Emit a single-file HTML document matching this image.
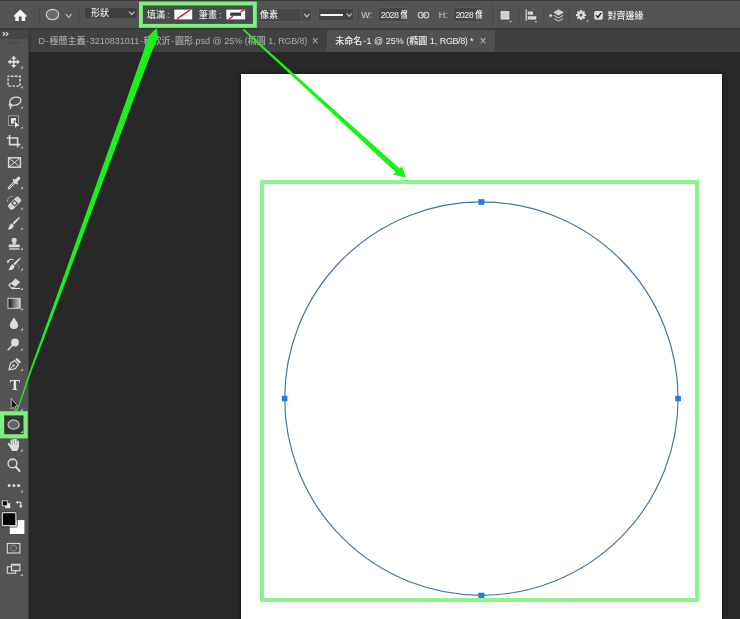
<!DOCTYPE html>
<html lang="zh-Hant">
<head>
<meta charset="utf-8">
<title>Photoshop</title>
<style>
*{box-sizing:border-box;margin:0;padding:0}
html,body{width:740px;height:619px;overflow:hidden;background:#282828}
body{will-change:transform}
body{position:relative;font-family:"Liberation Sans","Noto Sans CJK TC",sans-serif;color:#e8e8e8;font-size:9px;line-height:1;font-weight:500}
.abs{position:absolute}
#optbar{left:0;top:0;width:740px;height:28px;background:#535353;border-top:1.5px solid #3c3c3c}
#strip{left:0;top:28px;width:740px;height:24px;background:#3a3a3a}
#tabbar{left:30.5px;top:29.5px;width:710px;height:22px;background:#414141}
#tools{left:0;top:29.5px;width:29.2px;height:590px;background:#535353;border-top:9.3px solid #464646;border-right:1.3px solid #3d3d3d}
#canvas{left:241px;top:74px;width:481px;height:545px;background:#fff;box-shadow:0 0 3px 1px #1c1c1c}
.t{position:absolute;white-space:nowrap}
.sep{position:absolute;top:5px;width:1px;height:19px;background:#464646}
.fld{position:absolute;background:#474747;border:1px solid #575757}
.dd{position:absolute;background:#3f3f3f;border-radius:2px}
.tab{position:absolute;top:0;height:22px}
.hy{display:inline-block;width:4.4px;text-align:center}
</style>
</head>
<body>
<div id="strip" class="abs"></div>
<div id="optbar" class="abs"></div>
<div id="tabbar" class="abs">
  <div class="tab" style="left:0;width:296px"></div>
  <div class="tab" style="left:296.5px;width:167.5px;background:#505050"></div>
</div>
<div id="tools" class="abs"></div>
<div id="canvas" class="abs"></div>

<!-- option bar -->
<div class="sep" style="left:39px;top:8px;height:16px"></div>
<div class="sep" style="left:78px;top:8px;height:16px"></div>
<div class="sep" style="left:357.5px;top:7px;height:16px;background:#4a4a4a"></div>
<div class="sep" style="left:491.5px;top:4.5px;height:20px"></div>
<div class="sep" style="left:517.5px;top:4.5px;height:20px"></div>
<div class="sep" style="left:543px;top:4.5px;height:20px;background:#4b4b4b"></div>
<div class="sep" style="left:569px;top:4.5px;height:20px"></div>
<div class="dd" style="left:85px;top:7.5px;width:52px;height:10.5px"></div>
<div class="t" id="t_shape" style="left:91px;top:9.2px">形狀</div>
<div class="abs" style="left:142px;top:5px;width:112px;height:19.5px;background:#4a4a4a"></div>
<div class="t" id="t_fill" style="left:146.8px;top:11.3px;letter-spacing:.3px">填滿<span style="margin-left:1.5px">:</span></div>
<div class="t" id="t_stroke" style="left:198.8px;top:11.3px;letter-spacing:.3px">筆畫<span style="margin-left:1.5px">:</span></div>
<div class="fld" style="left:257.5px;top:8px;width:44px;height:13.5px"></div>
<div class="fld" style="left:301px;top:8px;width:11px;height:13.5px"></div>
<div class="t" id="t_px" style="left:260px;top:11.1px">像素</div>
<div class="dd" style="left:318px;top:7.8px;width:36px;height:13.4px;background:#424242;border:1px solid #575757;border-radius:1px"></div>
<div class="t" id="t_w" style="left:361.3px;top:10.6px;color:#d2d2d2">W:</div>
<div class="fld" style="left:378px;top:7.3px;width:30.3px;height:15.2px;overflow:hidden"><div class="t" id="t_wv" style="left:1.8px;top:2.3px;color:#ececec"><span style="letter-spacing:-.62px">2028 </span>像</div></div>
<div class="t" id="t_h" style="left:438.8px;top:10.6px;color:#d2d2d2">H:</div>
<div class="fld" style="left:452.7px;top:7.3px;width:30.3px;height:15.2px;overflow:hidden"><div class="t" id="t_hv" style="left:1.8px;top:2.3px;color:#ececec"><span style="letter-spacing:-.62px">2028 </span>像</div></div>
<div class="t" id="t_align" style="left:607.6px;top:12px">對齊邊緣</div>

<!-- tab texts -->
<div class="t" id="t_tab1" style="left:38.5px;top:37.2px;color:#acacac"><span id="s1">D</span><span id="s2" class="hy">-</span><span id="s3">極簡主義</span><span id="s4" class="hy">-</span><span id="s5">3210831011</span><span id="s6" class="hy">-</span><span id="s7">程欣沂</span><span id="s8" class="hy">-</span><span id="s9">圓形</span><span id="s10">.psd</span><span id="s11"> @ </span><span id="s12">25%</span><span id="s13"> (</span><span id="s14">橢圓</span><span id="s15"> 1, </span><span id="s16" style="letter-spacing:-.2px">RGB/8)</span></div>
<div class="t" id="t_x1" style="left:311.8px;top:35.2px;color:#b0b0b0;font-size:12px;font-weight:400">×</div>
<div class="t" id="t_tab2" style="left:335.2px;top:37.2px;color:#f0f0f0"><span id="u1">未命名</span><span id="u2" class="hy">-</span><span id="u3">1</span><span id="u4"> @ </span><span id="u5">25%</span><span id="u6"> (</span><span id="u7">橢圓</span><span id="u8"> 1, </span><span id="u9" style="letter-spacing:-.4px">RGB/8)</span><span id="u10"> *</span></div>
<div class="t" id="t_x2" style="left:479.4px;top:35.2px;color:#b8b8b8;font-size:12px;font-weight:400">×</div>

<svg class="abs" id="optsvg" style="left:0;top:0" width="740" height="30" viewBox="0 0 740 30">
<path d="M20.3,9.5 L26.9,15.7 L26.2,16.9 L25.2,16.5 V21.1 H21.6 V16.5 H18.8 V21.1 H15.3 V16.5 L14.4,16.9 L13.6,15.7 Z" fill="#f4f4f4"/>
<ellipse cx="52.5" cy="14.6" rx="6.2" ry="5.2" fill="#6c6c6c" stroke="#cfcfcf" stroke-width="1.1"/>
<path d="M65.9,14.100000000000001 L68.7,17.5 L71.5,14.100000000000001" fill="none" stroke="#c4c4c4" stroke-width="1.1"/>
<path d="M129.20000000000002,11.7 L131.8,14.7 L134.4,11.7" fill="none" stroke="#c4c4c4" stroke-width="1.1"/>
<path d="M304.2,13.9 L306.8,16.9 L309.40000000000003,13.9" fill="none" stroke="#c4c4c4" stroke-width="1.1"/>
<path d="M346.59999999999997,13.3 L349.2,16.3 L351.8,13.3" fill="none" stroke="#c4c4c4" stroke-width="1.1"/>
<rect x="174" y="9.2" width="18.6" height="10.6" fill="#fff" stroke="#3a3a3a" stroke-width="0.6"/><path d="M177,18.8 L190,10.2" stroke="#cc1f2d" stroke-width="1.5"/>
<rect x="226" y="9.2" width="19.4" height="10.6" fill="#fff" stroke="#3a3a3a" stroke-width="0.6"/><rect x="230.2" y="12.6" width="11" height="3.2" fill="#3a3a3a"/><path d="M229,19 L233,16.4 M240.5,11.8 L244.4,9.6" stroke="#cc1f2d" stroke-width="1.4"/>
<rect x="320.4" y="14" width="22.6" height="2" fill="#f4f4f4"/>
<g fill="none" stroke="#c6c6c6" stroke-width="1.2"><rect x="418.3" y="12.4" width="4.9" height="5.4" rx="2.6"/><rect x="423.8" y="12.4" width="4.9" height="5.4" rx="2.6"/><path d="M421,15.1 H426"/></g>
<rect x="501.1" y="11.7" width="7.7" height="7.3" fill="#cfcfcf" stroke="#ececec" stroke-width="0.9"/><path d="M509.4,21 h2.6 l-1.3,1.5 Z" fill="#d0d0d0"/>
<rect x="525.6" y="9.2" width="1.2" height="11.6" fill="#d6d6d6"/><rect x="527.8" y="11.5" width="5.2" height="3.2" fill="#d6d6d6"/><rect x="527.8" y="16.2" width="8.4" height="3.4" fill="#d6d6d6"/><path d="M534.6,21 h2.6 l-1.3,1.5 Z" fill="#d0d0d0"/>
<g fill="none" stroke="#d0d0d0" stroke-width="1"><path d="M554,12.4 L558.6,9.8 L563.2,12.4 L558.6,15 Z" fill="#d0d0d0"/><path d="M554,15.4 L558.6,18 L563.2,15.4"/><path d="M554,18.6 L558.6,21.2 L563.2,18.6"/><path d="M549,15.6 h3.4 M550.7,13.9 v3.4" stroke-width="1.1"/></g>
<g transform="translate(581,15)" fill="#dadada"><path fill-rule="evenodd" d="M-3.7,0 a3.7,3.7 0 1 0 7.4,0 a3.7,3.7 0 1 0 -7.4,0 Z M-1.5,0 a1.5,1.5 0 1 1 3,0 a1.5,1.5 0 1 1 -3,0 Z"/><rect x="-1" y="-5" width="2" height="2.4" transform="rotate(0)"/><rect x="-1" y="-5" width="2" height="2.4" transform="rotate(45)"/><rect x="-1" y="-5" width="2" height="2.4" transform="rotate(90)"/><rect x="-1" y="-5" width="2" height="2.4" transform="rotate(135)"/><rect x="-1" y="-5" width="2" height="2.4" transform="rotate(180)"/><rect x="-1" y="-5" width="2" height="2.4" transform="rotate(225)"/><rect x="-1" y="-5" width="2" height="2.4" transform="rotate(270)"/><rect x="-1" y="-5" width="2" height="2.4" transform="rotate(315)"/></g><path d="M586.2,20.4 h2.6 l-1.3,1.5 Z" fill="#d0d0d0"/>
<rect x="594.2" y="11.1" width="8.6" height="8.6" rx="1.6" fill="#dedede"/><path d="M596,15.2 L597.9,17.3 L601.2,13" fill="none" stroke="#2e2e2e" stroke-width="1.5"/>
</svg>
<svg class="abs" id="toolsvg" style="left:0;top:0" width="40" height="619" viewBox="0 0 40 619">
<path d="M2.9,32.2 L4.9,34 L2.9,35.8 M6,32.2 L8,34 L6,35.8" fill="none" stroke="#e0e0e0" stroke-width="1.1"/>
<rect x="8" y="42" width="12.4" height="1.2" fill="#474747"/>
<g transform="translate(13.8,61.9)" fill="#dcdcdc"><path d="M0,-6.2 L2.7,-3.1 L0.8,-3.1 L0.8,-0.8 L3.1,-0.8 L3.1,-2.7 L6.2,0 L3.1,2.7 L3.1,0.8 L0.8,0.8 L0.8,3.1 L2.7,3.1 L0,6.2 L-2.7,3.1 L-0.8,3.1 L-0.8,0.8 L-3.1,0.8 L-3.1,2.7 L-6.2,0 L-3.1,-2.7 L-3.1,-0.8 L-0.8,-0.8 L-0.8,-3.1 L-2.7,-3.1 Z"/></g>
<path d="M22.8,66.0 V68.4 H20.400000000000002 Z" fill="#c8c8c8"/>
<rect x="8.1" y="76.3" width="11.9" height="9.8" fill="none" stroke="#dcdcdc" stroke-width="1.4" stroke-dasharray="2.6 1.4" stroke-dashoffset="1.3"/>
<path d="M22.8,85.8 V88.2 H20.400000000000002 Z" fill="#c8c8c8"/>
<g fill="none" stroke="#dcdcdc" stroke-width="1.3"><ellipse cx="15.3" cy="101.2" rx="5.8" ry="3.9" transform="rotate(-18 15.3 101.2)"/><path d="M10.2,103.6 C8.6,104.6 9.3,106.6 10.9,106.2 C12.2,105.8 11.6,104 10.4,104.6 M10.8,106.2 C11.2,107.4 10.6,108.3 9.8,108.8"/></g>
<path d="M22.8,106.19999999999999 V108.6 H20.400000000000002 Z" fill="#c8c8c8"/>
<rect x="8.4" y="115.8" width="10.2" height="9.6" fill="none" stroke="#a4a4a4" stroke-width="0.9"/><rect x="9.6" y="117" width="7.2" height="7.4" fill="#3e3e3e"/><rect x="10.8" y="118" width="5.3" height="5.6" fill="#e4e4e4"/><path d="M14.3,120.4 L20.4,126 L16.8,126.6 L14.5,129.2 Z" fill="#f0f0f0" stroke="#3c3c3c" stroke-width="0.8" stroke-linejoin="round"/>
<path d="M22.8,126.19999999999999 V128.6 H20.400000000000002 Z" fill="#c8c8c8"/>
<path d="M9.6,135 V144.6 H20.4 M6.8,138 H17.6 V147.4" fill="none" stroke="#dcdcdc" stroke-width="1.6"/>
<path d="M22.8,146.2 V148.6 H20.400000000000002 Z" fill="#c8c8c8"/>
<g fill="none" stroke="#dcdcdc"><rect x="8.6" y="157.8" width="11.8" height="9.4" stroke-width="1.4"/><path d="M8.6,157.8 L20.4,167.2 M20.4,157.8 L8.6,167.2" stroke-width="1"/></g>
<g stroke-linecap="round"><path d="M9,188 L15.6,181.4" stroke="#dcdcdc" stroke-width="2.6"/><path d="M9.6,187.4 L14.8,182.2" stroke="#535353" stroke-width="0.9"/><path d="M15.2,181.8 L18.6,178.4" stroke="#dcdcdc" stroke-width="3.4"/><path d="M13.4,179.6 L17.4,183.6" stroke="#dcdcdc" stroke-width="1.6"/></g>
<path d="M22.8,186.6 V189 H20.400000000000002 Z" fill="#c8c8c8"/>
<g transform="rotate(-45 14.6 203.2)"><rect x="7.4" y="200" width="14.4" height="6.4" rx="2" fill="#dcdcdc"/><rect x="12.1" y="200.7" width="5" height="5" fill="#535353"/><rect x="13.3" y="201.9" width="2.6" height="2.6" fill="#dcdcdc"/><path d="M9.6,201.5 v3.4 M19.6,201.5 v3.4" stroke="#535353" stroke-width="0.8" stroke-dasharray="0.8 0.8"/></g><path d="M7.6,201.5 A4.6,4.6 0 0 1 12.5,196.3" fill="none" stroke="#dcdcdc" stroke-width="1" stroke-dasharray="1.2 1"/>
<path d="M22.8,207.2 V209.6 H20.400000000000002 Z" fill="#c8c8c8"/>
<g transform="translate(0,0)" fill="#dcdcdc"><path d="M12.6,222.8 L19.1,216.9 L19.9,217.7 L14.2,224.5 Z"/><path d="M11.9,223.3 L13.8,225.2 C13.6,228.3 10.8,229.8 7.6,229.4 C9.4,228 8.8,225 11.9,223.3 Z"/></g>
<path d="M22.8,227.2 V229.6 H20.400000000000002 Z" fill="#c8c8c8"/>
<g fill="#dcdcdc"><circle cx="14.2" cy="240.3" r="2.5"/><path d="M13,242 h2.4 l0.6,2.6 h-3.6 Z"/><path d="M9.4,244.4 h9.6 a0.8,0.8 0 0 1 0.8,0.8 v2 h-11.2 v-2 a0.8,0.8 0 0 1 0.8,-0.8 Z"/><rect x="9.2" y="248.3" width="10.2" height="1.3"/></g>
<path d="M22.8,247.6 V250 H20.400000000000002 Z" fill="#c8c8c8"/>
<g transform="translate(0.8,40.8)" fill="#dcdcdc"><path d="M12.6,222.8 L19.1,216.9 L19.9,217.7 L14.2,224.5 Z"/><path d="M11.9,223.3 L13.8,225.2 C13.6,228.3 10.8,229.8 7.6,229.4 C9.4,228 8.8,225 11.9,223.3 Z"/></g>
<path d="M8,262 C8.6,259.4 11.4,258.6 13.4,260" fill="none" stroke="#dcdcdc" stroke-width="1.1"/><path d="M6.7,260.2 L9.6,261.2 L7.6,263.4 Z" fill="#dcdcdc"/><path d="M17.6,264.6 L19.4,267 L17.8,269.4" fill="none" stroke="#dcdcdc" stroke-width="0.8" stroke-dasharray="1 1"/>
<path d="M22.8,268.0 V270.4 H20.400000000000002 Z" fill="#c8c8c8"/>
<g><path d="M15.4,278.6 L20.2,281.9 L15.3,286.7 L10.5,283.4 Z" fill="#dcdcdc"/><path d="M10.9,283 L8.8,285.2 L11.9,288.3 L14.6,287" fill="none" stroke="#dcdcdc" stroke-width="1.1"/><path d="M11.5,288.5 H20.2" stroke="#dcdcdc" stroke-width="1.1"/></g>
<path d="M22.8,287.6 V290 H20.400000000000002 Z" fill="#c8c8c8"/>
<defs><linearGradient id="gr" x1="0" x2="1" y1="0" y2="0"><stop offset="0" stop-color="#111"/><stop offset="1" stop-color="#cfcfcf"/></linearGradient></defs><rect x="8" y="298.3" width="12.2" height="10" fill="url(#gr)" stroke="#d0d0d0" stroke-width="1"/>
<path d="M22.8,307.8 V310.2 H20.400000000000002 Z" fill="#c8c8c8"/>
<path d="M14,317.4 C12.8,319.6 9.8,322.6 9.8,325 A4.2,3.9 0 0 0 18.2,325 C18.2,322.6 15.2,319.6 14,317.4 Z" fill="#dcdcdc"/>
<path d="M22.8,328.0 V330.4 H20.400000000000002 Z" fill="#c8c8c8"/>
<circle cx="15" cy="342.5" r="3.9" fill="#dcdcdc"/><path d="M12.6,345.2 L8.2,349.8" stroke="#dcdcdc" stroke-width="1.5" stroke-linecap="round"/>
<path d="M22.8,348.20000000000005 V350.6 H20.400000000000002 Z" fill="#c8c8c8"/>
<g><path d="M9,370 L10.4,363.6 L14.6,360.6 L18.4,364.4 L15.4,368.6 Z" fill="none" stroke="#dcdcdc" stroke-width="1.2" stroke-linejoin="round"/><path d="M9.2,369.8 L13,366" stroke="#dcdcdc" stroke-width="0.9"/><circle cx="13.6" cy="365.4" r="1.1" fill="#dcdcdc"/><path d="M15.4,359.4 L16.9,357.9 L21,362 L19.5,363.5 Z" fill="#dcdcdc"/></g>
<path d="M22.8,368.40000000000003 V370.8 H20.400000000000002 Z" fill="#c8c8c8"/>
<rect x="3" y="414" width="22" height="21.5" fill="#353535"/><ellipse cx="13.6" cy="424.6" rx="5.6" ry="4.6" fill="#666" stroke="#cfcfcf" stroke-width="1.1"/><path d="M22.8,430.6 V433 H20.4 Z" fill="#c8c8c8"/>
<text x="14.9" y="389.9" text-anchor="middle" font-family="Liberation Serif, serif" font-weight="bold" font-size="15.4" fill="#e6e6e6">T</text>
<path d="M11.2,398.4 V409 L13.5,407 L15,410.4 L16.4,409.8 L14.9,406.5 L17.8,406.3 Z" fill="#0a0a0a" stroke="#dcdcdc" stroke-width="0.8" stroke-linejoin="round"/>
<path d="M22.8,408.6 V411 H20.400000000000002 Z" fill="#c8c8c8"/>
<g fill="none" stroke="#dcdcdc" stroke-linecap="round"><path d="M11.4,440.4 V446 M13.6,439.4 V446 M15.8,439.8 V446 M18,441.4 V446.4" stroke-width="1.9"/><path d="M8.6,443.8 L11.2,447.6" stroke-width="1.8"/></g><path d="M10.4,445 H19 C19,448 18,450 17,451 H12.4 C11,450 10.2,448 10.4,445 Z" fill="#dcdcdc"/>
<path d="M22.8,449.0 V451.4 H20.400000000000002 Z" fill="#c8c8c8"/>
<circle cx="12.5" cy="463.4" r="4.4" fill="none" stroke="#dcdcdc" stroke-width="1.4"/><path d="M10.2,461.8 A2.8,2.8 0 0 1 13.6,460.9" fill="none" stroke="#bbb" stroke-width="0.7"/><path d="M15.8,466.8 L19.6,471" stroke="#dcdcdc" stroke-width="2" stroke-linecap="round"/>
<g fill="#dcdcdc"><circle cx="9.2" cy="485.6" r="1.5"/><circle cx="13.9" cy="485.6" r="1.5"/><circle cx="18.6" cy="485.6" r="1.5"/></g>
<path d="M22.8,490.0 V492.4 H20.400000000000002 Z" fill="#c8c8c8"/>
<rect x="5.2" y="503.2" width="5" height="5" fill="#e8e8e8"/><rect x="2.3" y="500.8" width="5" height="5" fill="#000" stroke="#e0e0e0" stroke-width="0.9"/>
<path d="M17.6,502.3 H20.8 V505.8" fill="none" stroke="#dcdcdc" stroke-width="1.2"/><path d="M15.6,502.3 L18,500.4 V504.2 Z M20.8,508.2 L18.9,505.6 H22.7 Z" fill="#dcdcdc"/>
<rect x="9.8" y="520" width="14.6" height="14" fill="#fff"/><rect x="2.3" y="512.7" width="13.6" height="13" rx="1" fill="#000" stroke="#cfcfcf" stroke-width="1.3"/><rect x="0.9" y="511.3" width="16.4" height="15.8" rx="1.5" fill="none" stroke="#3e3e3e" stroke-width="0.8"/>
<rect x="7.3" y="543.5" width="12.6" height="9.5" fill="none" stroke="#dcdcdc" stroke-width="1.1"/><circle cx="13.6" cy="548.2" r="2.9" fill="none" stroke="#c8c8c8" stroke-width="1" stroke-dasharray="1.1 0.9"/>
<rect x="7.3" y="566.8" width="8.4" height="6.4" fill="none" stroke="#dcdcdc" stroke-width="1.1"/><rect x="11.5" y="564.3" width="8.4" height="6.4" fill="#5a5a5a" stroke="#dcdcdc" stroke-width="1.1"/><rect x="11.5" y="564" width="8.4" height="1.6" fill="#dcdcdc"/>
<path d="M22.8,573.6 V576 H20.400000000000002 Z" fill="#c8c8c8"/>
</svg>
<!-- overlay svg: canvas shapes + arrows -->
<svg class="abs" style="left:0;top:0" width="740" height="619" viewBox="0 0 740 619">
  <circle cx="481.4" cy="398.6" r="196.7" fill="none" stroke="#4272a8" stroke-width="1.15"/>
  <g fill="#1e7de0">
    <rect x="478.4" y="199.2" width="6" height="5.6"/>
    <rect x="478.4" y="592.7" width="6" height="5.4"/>
    <rect x="281.8" y="395.8" width="5.6" height="5.5"/>
    <rect x="675.3" y="395.8" width="5.6" height="5.5"/>
  </g>
  <rect x="262" y="182" width="435" height="418" fill="none" stroke="#8cf58c" stroke-width="4"/>
  <rect x="140.95" y="3.5" width="113.9" height="22.35" fill="none" stroke="#7df07d" stroke-width="3.9"/>
  <rect x="2.1" y="413.3" width="23.5" height="23" fill="none" stroke="#7df07d" stroke-width="4.2"/>
  <polygon fill="#1cf01c" points="156.8,28 148.6,36 143.3,52 136.95,70 124.65,105 112.1,140 97.9,180 62.5,280 30.05,370 16.6,411 17.6,411 31.95,370 66.3,280 103.5,180 118.5,140 131.55,105 144.85,70 151.7,52 158,37.5"/>
  <polygon fill="#1cf01c" points="242.9,30.2 396,172.4 392.7,174.6 405.9,177.8 402,166.2 399.7,168.4 244,29.1"/>
</svg>
</body>
</html>
